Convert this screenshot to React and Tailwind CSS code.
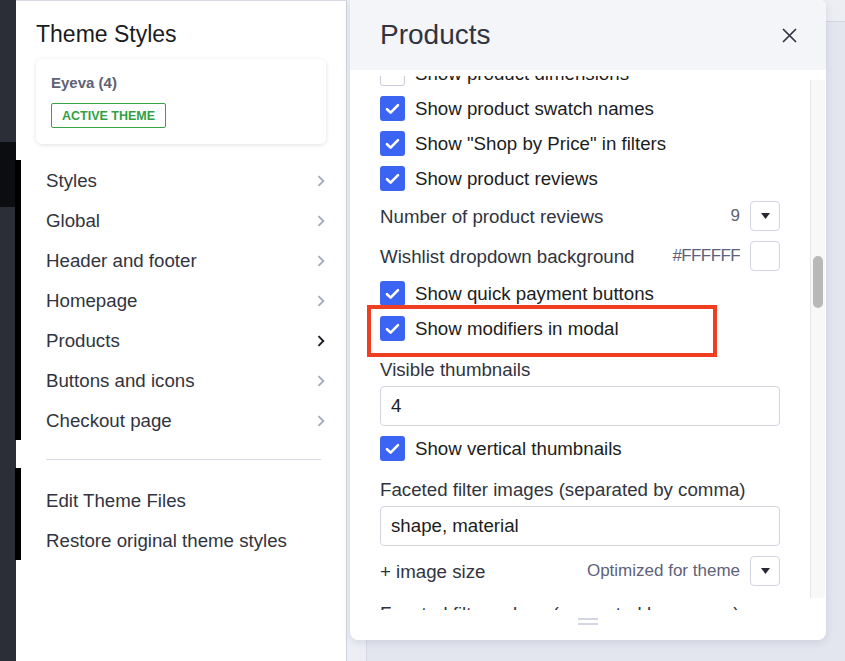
import React from 'react';

const MENU = ['Styles', 'Global', 'Header and footer', 'Homepage', 'Products', 'Buttons and icons', 'Checkout page'];

function Chevron({ active }) {
    return (
        <svg width="8" height="12" viewBox="0 0 8 12" fill="none">
            <path d="M1.5 1.2 6.3 6l-4.8 4.8" stroke={active ? '#1a1c22' : '#a6aabf'} strokeWidth="1.9" />
        </svg>
    );
}

function Check({ checked = true }) {
    if (!checked) {
        return <span className="w-[25px] h-[25px] shrink-0 rounded-[3px] border border-[#c6cad9] bg-white" />;
    }
    return (
        <span className="w-[25px] h-[25px] shrink-0 rounded-[3px] bg-[#3c64f2] flex items-center justify-center">
            <svg width="15" height="12" viewBox="0 0 15 12" fill="none">
                <path d="M2 6.2 5.6 9.6 13 2.2" stroke="white" strokeWidth="2.6" strokeLinecap="round" strokeLinejoin="round" />
            </svg>
        </span>
    );
}

function CheckRow({ label, checked, children }) {
    return (
        <div className="relative h-[35px] flex items-center gap-[10px]">
            <Check checked={checked} />
            <span className="pt-px text-[#1c1d21]">{label}</span>
            {children}
        </div>
    );
}

function Caret() {
    return (
        <span className="w-[30px] h-[30px] rounded-[4px] border border-[#d2d5e2] flex items-center justify-center">
            <svg width="9" height="6" viewBox="0 0 9 6">
                <path d="M0 0h9L4.5 6z" fill="#262833" />
            </svg>
        </span>
    );
}

function FieldRow({ label, value, swatch }) {
    return (
        <div className="h-[40px] flex items-center">
            <span className="flex-1 pt-px text-[#313440]">{label}</span>
            <span className={`text-[17px] text-[#5e6278] mr-[10px] ${swatch ? 'tracking-[-0.6px]' : ''}`}>{value}</span>
            {swatch ? (
                <span className="w-[30px] h-[30px] rounded-[4px] border border-[#d2d5e2] bg-white" />
            ) : (
                <Caret />
            )}
        </div>
    );
}

export default function App() {
    return (
        <div className="relative w-[845px] h-[661px] overflow-hidden flex bg-[#eceef4] font-['Liberation_Sans',Arial,sans-serif] text-[18.7px] leading-[24px]">
            {/* dark app strip */}
            <div className="relative w-[16px] shrink-0 bg-[#2b2e37]">
                <div className="absolute left-0 top-[142px] w-[16px] h-[65px] bg-[#0c0d10]" />
            </div>

            {/* Theme styles sidebar */}
            <div className="relative w-[331px] shrink-0 bg-white border-t border-[#d7dae4] border-r border-r-[#d0d3de] px-[20px] flex flex-col">
                <div className="absolute -left-px top-[159px] w-[6px] h-[280px] bg-black" />
                <div className="absolute -left-px top-[467px] w-[6px] h-[92px] bg-black" />

                <h1 className="mt-[19px] text-[23px] leading-[28px] text-[#1a1c22]">Theme Styles</h1>

                <div className="mt-[11px] h-[85px] rounded-[6px] bg-white shadow-[0_1px_4px_rgba(40,45,70,0.14)] px-[15px] pt-[14px]">
                    <div className="text-[15px] leading-[20px] font-bold text-[#5d6275]">Eyeva (4)</div>
                    <span className="mt-[10px] inline-flex items-center h-[25px] px-[10px] border border-[#38a247] rounded-[2px] text-[12.5px] font-bold text-[#32a043]">
                        ACTIVE THEME
                    </span>
                </div>

                <nav className="mt-[17px] pl-[10px] pr-px">
                    {MENU.map((item) => (
                        <div key={item} className="h-[40px] flex items-center justify-between text-[#313440]">
                            <span>{item}</span>
                            <Chevron active={item === 'Products'} />
                        </div>
                    ))}
                </nav>

                <div className="ml-[10px] mr-[5px] mt-[18px] border-t border-[#d9dbe5]" />

                <div className="mt-[21px] px-[10px] text-[#313440]">
                    <div className="h-[40px] flex items-center">Edit Theme Files</div>
                    <div className="h-[40px] flex items-center">Restore original theme styles</div>
                </div>
            </div>

            {/* page behind drawer */}
            <div className="relative flex-1 pl-[19px] pt-[21px]">
                <div className="h-full bg-[#e3e5ef] border-l border-t border-[#d5d8e3]" />

                {/* Products drawer */}
                <div className="absolute left-[3px] top-0 w-[476px] h-[640px] bg-white rounded-b-[8px] rounded-tr-[6px] shadow-[0_2px_8px_rgba(40,45,70,0.12)] flex flex-col overflow-hidden">
                    <div className="h-[70px] shrink-0 bg-[#f4f5f9] pl-[30px] pr-[29px] flex items-center justify-between">
                        <h2 className="text-[28px] leading-[34px] text-[#313440]">Products</h2>
                        <svg width="15" height="15" viewBox="0 0 15 15" fill="none">
                            <path d="M1 1l13 13M14 1 1 14" stroke="#313440" strokeWidth="1.7" />
                        </svg>
                    </div>

                    <div className="relative h-[540px] flex">
                        <div className="flex-1 mt-[6px] pl-[30px] pr-[30px] overflow-hidden">
                            <div className="-mt-[20px]">
                                <CheckRow label="Show product dimensions" checked={false} />
                                <CheckRow label="Show product swatch names" />
                                <CheckRow label={'Show "Shop by Price" in filters'} />
                                <CheckRow label="Show product reviews" />
                                <FieldRow label="Number of product reviews" value="9" />
                                <FieldRow label="Wishlist dropdown background" value="#FFFFFF" swatch />
                                <CheckRow label="Show quick payment buttons" />
                                <CheckRow label="Show modifiers in modal">
                                    <span className="absolute -left-[13px] -top-[6px] w-[350px] h-[52px] border-4 border-[#f03e22]" />
                                </CheckRow>

                                <div className="mt-[11px] pt-px text-[#313440]">Visible thumbnails</div>
                                <div className="mt-[4px] h-[40px] rounded-[4px] border border-[#d2d5e2] px-[10px] flex items-center text-[#1c1d21]">4</div>

                                <div className="mt-[5px]">
                                    <CheckRow label="Show vertical thumbnails" />
                                </div>

                                <div className="mt-[11px] pt-px text-[#313440]">Faceted filter images (separated by comma)</div>
                                <div className="mt-[4px] h-[40px] rounded-[4px] border border-[#d2d5e2] px-[10px] flex items-center text-[#1c1d21]">shape, material</div>

                                <div className="mt-[5px]">
                                    <FieldRow label="+ image size" value="Optimized for theme" />
                                </div>

                                <div className="mt-[11px] text-[#313440]">Faceted filter values (separated by comma)</div>
                            </div>
                        </div>

                        {/* scrollbar */}
                        <div className="w-[15px] mr-px mt-[10px] mb-[12px] bg-[#f8f8f8] border-l border-[#e6e6e6] pt-[176px] flex justify-center">
                            <div className="w-[10px] h-[52px] rounded-full bg-[#b9b9b9]" />
                        </div>
                    </div>

                    <div className="flex-1 flex flex-col items-center pt-[8px] gap-[3px]">
                        <span className="w-[20px] h-[2px] bg-[#d3d6e4]" />
                        <span className="w-[20px] h-[2px] bg-[#d3d6e4]" />
                    </div>
                </div>
            </div>
        </div>
    );
}
